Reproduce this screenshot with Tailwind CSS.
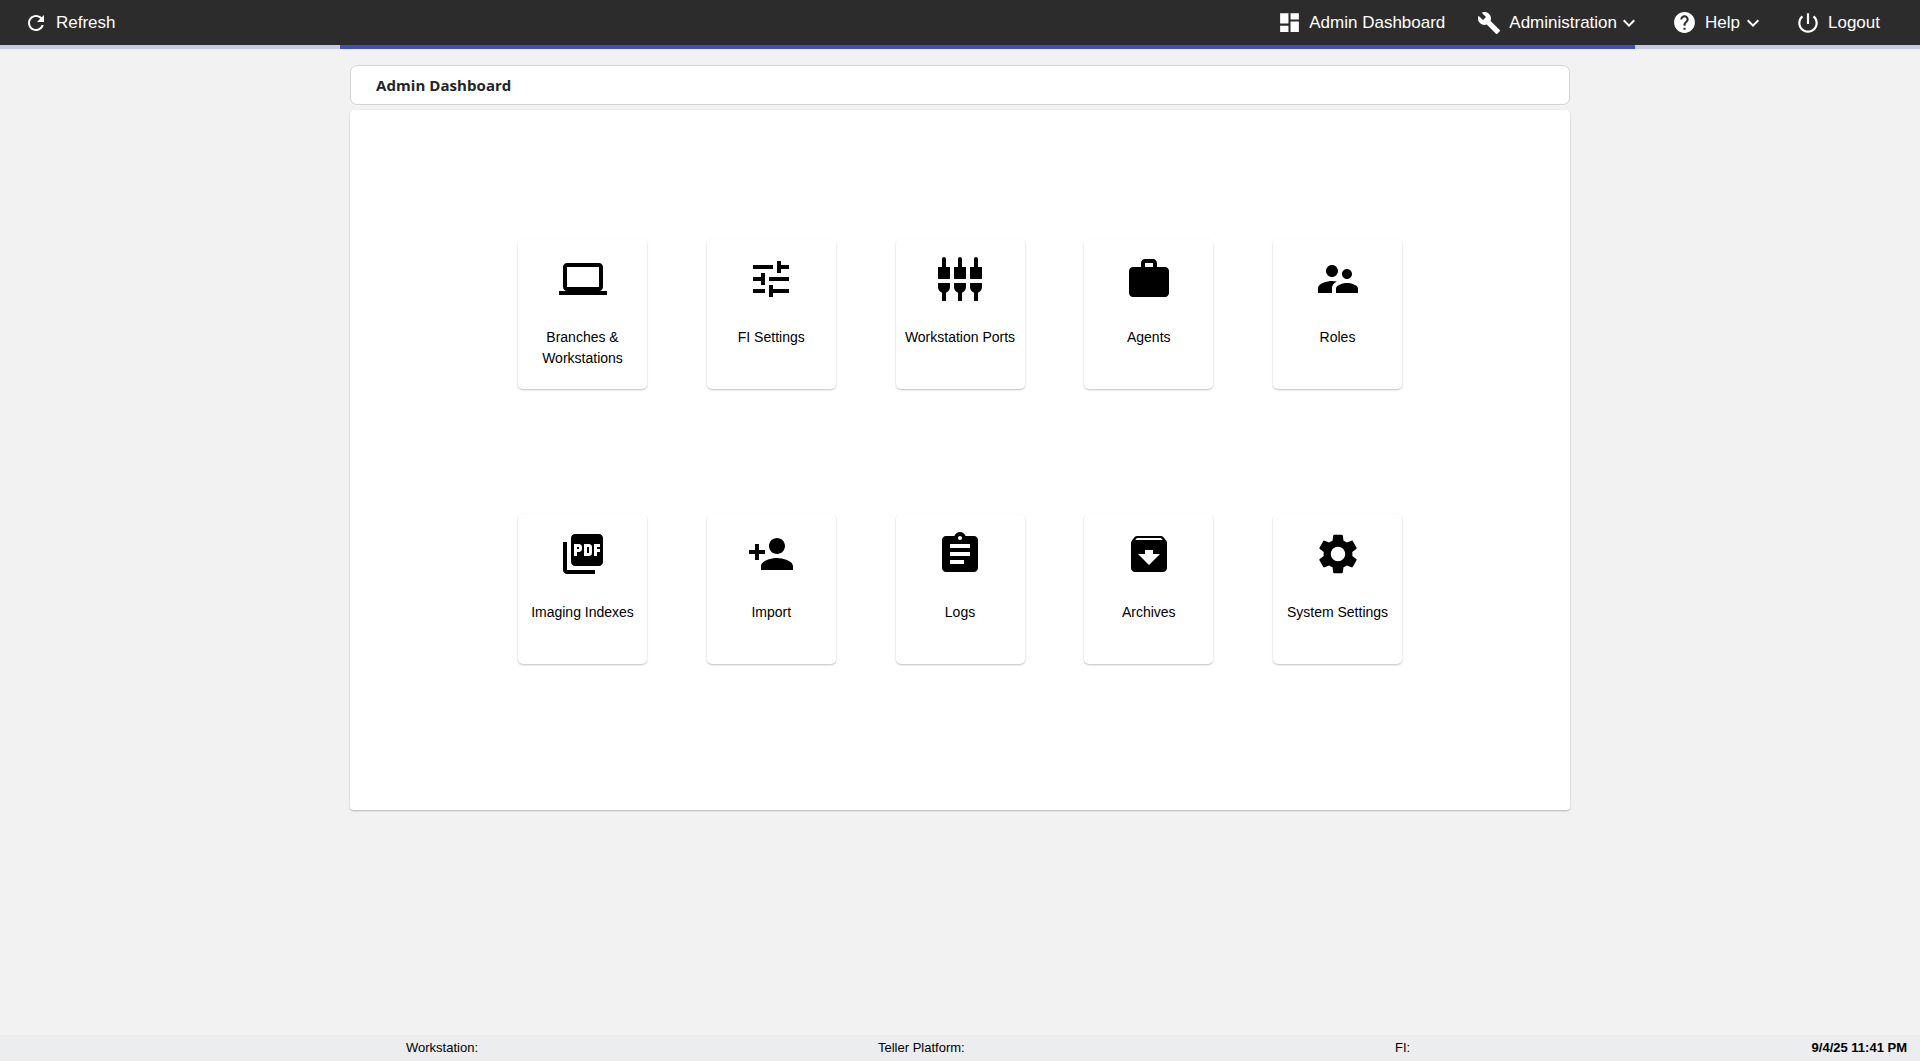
<!DOCTYPE html>
<html><head><meta charset="utf-8"><title>Admin Dashboard</title>
<script src="https://cdn.jsdelivr.net/npm/@tailwindcss/browser@4"></script></head>
<body class="h-[1061px] w-[1920px] overflow-hidden bg-[#f2f2f2] font-['Liberation_Sans',sans-serif] flex flex-col">
<header class="h-[45px] shrink-0 bg-[#2c2c2c] text-white text-[17px] flex items-center pl-[24px] pr-[40px]">
  <svg class="w-6 h-6 fill-white" viewBox="0 0 24 24"><path d="M17.65 6.35C16.2 4.9 14.21 4 12 4c-4.42 0-7.99 3.58-7.99 8s3.57 8 7.99 8c3.73 0 6.84-2.55 7.73-6h-2.08c-.82 2.33-3.04 4-5.65 4-3.31 0-6-2.69-6-6s2.69-6 6-6c1.66 0 3.14.69 4.22 1.78L13 11h7V4l-2.35 2.35z"/></svg>
  <span class="ml-2">Refresh</span>
  <div class="ml-auto flex items-center">
    <svg class="w-[25px] h-[25px] fill-white" viewBox="0 0 24 24"><path d="M3 13h8V3H3v10zm0 8h8v-6H3v6zm10 0h8V11h-8v10zm0-18v6h8V3h-8z"/></svg>
    <span class="ml-[7px]">Admin Dashboard</span>
    <svg class="w-6 h-6 fill-white ml-8" viewBox="0 0 24 24"><path d="M22.7 19l-9.1-9.1c.9-2.3.4-5-1.5-6.9-2-2-5-2.4-7.4-1.3L9 6 6 9 1.6 4.7C.4 7.1.9 10.1 2.9 12.1c1.9 1.9 4.6 2.4 6.9 1.5l9.1 9.1c.4.4 1 .4 1.4 0l2.3-2.3c.5-.4.5-1.1.1-1.4z"/></svg>
    <span class="ml-2">Administration</span>
    <svg class="w-6 h-6 fill-white" viewBox="0 0 24 24"><path d="M7.41 8.59L12 13.17l4.59-4.58L18 10l-6 6-6-6 1.41-1.41z"/></svg>
    <svg class="w-[25px] h-[25px] fill-white ml-[31px]" viewBox="0 0 24 24"><path d="M12 2C6.48 2 2 6.48 2 12s4.48 10 10 10 10-4.48 10-10S17.52 2 12 2zm1 17h-2v-2h2v2zm2.07-7.75l-.9.92C13.45 12.9 13 13.5 13 15h-2v-.5c0-1.1.45-2.1 1.17-2.83l1.24-1.26c.37-.36.59-.86.59-1.41 0-1.1-.9-2-2-2s-2 .9-2 2H8c0-2.21 1.79-4 4-4s4 1.79 4 4c0 .88-.36 1.68-.93 2.25z"/></svg>
    <span class="ml-2">Help</span>
    <svg class="w-6 h-6 fill-white ml-[1px]" viewBox="0 0 24 24"><path d="M7.41 8.59L12 13.17l4.59-4.58L18 10l-6 6-6-6 1.41-1.41z"/></svg>
    <svg class="w-[26px] h-[26px] fill-white ml-[30px]" viewBox="0 0 24 24"><path d="M13 3h-2v10h2V3zm4.83 2.17l-1.42 1.42C17.99 7.86 19 9.81 19 12c0 3.87-3.13 7-7 7s-7-3.13-7-7c0-2.19 1.01-4.14 2.58-5.42L6.17 5.17C4.23 6.82 3 9.26 3 12c0 4.97 4.03 9 9 9s9-4.03 9-9c0-2.74-1.23-5.18-3.17-6.83z"/></svg>
    <span class="ml-[7px]">Logout</span>
  </div>
</header>
<div class="h-1 shrink-0 bg-[#c5cae9] pl-[340px] pr-[285px]"><div class="h-full bg-[#3f51b5]"></div></div>
<main class="flex-1 w-[1220px] ml-[350px] pt-4">
  <div class="h-10 bg-white border border-[#d4d4d4] rounded-[7px] flex items-center pl-[25px] font-['Open_Sans',sans-serif] font-bold text-[15px] tracking-[0.06px] text-[#212529]">Admin Dashboard</div>
  <div class="mt-[5px] h-[700px] bg-white rounded-[4px] shadow-[0_1px_2px_rgba(0,0,0,0.25)] pt-[129px] pl-[168px]">
    <div class="grid grid-cols-[repeat(5,129px)] auto-rows-[150px] gap-x-[59.75px] gap-y-[125px] text-[14px] leading-[21px] text-black text-center">
      <div class="rounded-[5px] bg-white shadow-[0_1px_2px_rgba(0,0,0,0.25)] pt-4 px-2 flex flex-col items-center"><svg class="w-12 h-12" viewBox="0 0 24 24"><path d="M20 18c1.1 0 1.99-.9 1.99-2L22 6c0-1.1-.9-2-2-2H4c-1.1 0-2 .9-2 2v10c0 1.1.9 2 2 2H0v2h24v-2h-4zM4 6h16v10H4V6z"/></svg><div class="mt-6">Branches &amp; Workstations</div></div>
      <div class="rounded-[5px] bg-white shadow-[0_1px_2px_rgba(0,0,0,0.25)] pt-4 px-2 flex flex-col items-center"><svg class="w-12 h-12" viewBox="0 0 24 24"><path d="M3 17v2h6v-2H3zM3 5v2h10V5H3zm10 16v-2h8v-2h-8v-2h-2v6h2zM7 9v2H3v2h4v2h2V9H7zm14 4v-2H11v2h10zm-6-4h2V7h4V5h-4V3h-2v6z"/></svg><div class="mt-6">FI Settings</div></div>
      <div class="rounded-[5px] bg-white shadow-[0_1px_2px_rgba(0,0,0,0.25)] pt-4 px-1 flex flex-col items-center"><svg class="w-12 h-12" viewBox="0 0 24 24"><path d="M5 2c0-.55-.45-1-1-1s-1 .45-1 1v4H1v6h6V6H5V2zm4 14c0 1.3.84 2.4 2 2.82V23h2v-4.18c1.16-.41 2-1.51 2-2.82v-2H9v2zm-8 0c0 1.3.84 2.4 2 2.82V23h2v-4.18C6.16 18.4 7 17.3 7 16v-2H1v2zM21 6V2c0-.55-.45-1-1-1s-1 .45-1 1v4h-2v6h6V6h-2zm-8-4c0-.55-.45-1-1-1s-1 .45-1 1v4H9v6h6V6h-2V2zm4 14c0 1.3.84 2.4 2 2.82V23h2v-4.18c1.16-.41 2-1.51 2-2.82v-2h-6v2z"/></svg><div class="mt-6">Workstation Ports</div></div>
      <div class="rounded-[5px] bg-white shadow-[0_1px_2px_rgba(0,0,0,0.25)] pt-4 px-2 flex flex-col items-center"><svg class="w-12 h-12" viewBox="0 0 24 24"><path d="M20 6h-4V4c0-1.11-.89-2-2-2h-4c-1.11 0-2 .89-2 2v2H4c-1.11 0-1.99.89-1.99 2L2 19c0 1.11.89 2 2 2h16c1.11 0 2-.89 2-2V8c0-1.11-.89-2-2-2zm-6 0h-4V4h4v2z"/></svg><div class="mt-6">Agents</div></div>
      <div class="rounded-[5px] bg-white shadow-[0_1px_2px_rgba(0,0,0,0.25)] pt-4 px-2 flex flex-col items-center"><svg class="w-12 h-12" viewBox="0 0 24 24"><path d="M16.5 12c1.38 0 2.49-1.12 2.49-2.5S17.88 7 16.5 7C15.12 7 14 8.12 14 9.5s1.12 2.5 2.5 2.5zM9 11c1.66 0 2.99-1.34 2.99-3S10.66 5 9 5C7.34 5 6 6.34 6 8s1.34 3 3 3zm7.5 3c-1.83 0-5.5.92-5.5 2.75V19h11v-2.25c0-1.83-3.67-2.75-5.5-2.75zM9 13c-2.33 0-7 1.17-7 3.5V19h7v-2.25c0-.85.33-2.34 2.37-3.47C10.5 13.1 9.66 13 9 13z"/></svg><div class="mt-6">Roles</div></div>
      <div class="rounded-[5px] bg-white shadow-[0_1px_2px_rgba(0,0,0,0.25)] pt-4 px-1 flex flex-col items-center"><svg class="w-12 h-12" viewBox="0 0 24 24"><path d="M20 2H8c-1.1 0-2 .9-2 2v12c0 1.1.9 2 2 2h12c1.1 0 2-.9 2-2V4c0-1.1-.9-2-2-2zm-8.5 7.5c0 .83-.67 1.5-1.5 1.5H9v2H7.5V7H10c.83 0 1.5.67 1.5 1.5v1zm5 2c0 .83-.67 1.5-1.5 1.5h-2.5V7H15c.83 0 1.5.67 1.5 1.5v3zm4-3H19v1h1.5V11H19v2h-1.5V7h3v1.5zM9 9.5h1v-1H9v1zM4 6H2v14c0 1.1.9 2 2 2h14v-2H4V6zm10 5.5h1v-3h-1v3z"/></svg><div class="mt-6">Imaging Indexes</div></div>
      <div class="rounded-[5px] bg-white shadow-[0_1px_2px_rgba(0,0,0,0.25)] pt-4 px-2 flex flex-col items-center"><svg class="w-12 h-12" viewBox="0 0 24 24"><path d="M15 12c2.21 0 4-1.79 4-4s-1.79-4-4-4-4 1.79-4 4 1.79 4 4 4zm-9-2V7H4v3H1v2h3v3h2v-3h3v-2H6zm9 4c-2.67 0-8 1.34-8 4v2h16v-2c0-2.66-5.33-4-8-4z"/></svg><div class="mt-6">Import</div></div>
      <div class="rounded-[5px] bg-white shadow-[0_1px_2px_rgba(0,0,0,0.25)] pt-4 px-2 flex flex-col items-center"><svg class="w-12 h-12" viewBox="0 0 24 24"><path d="M19 3h-4.18C14.4 1.84 13.3 1 12 1c-1.3 0-2.4.84-2.82 2H5c-1.1 0-2 .9-2 2v14c0 1.1.9 2 2 2h14c1.1 0 2-.9 2-2V5c0-1.1-.9-2-2-2zm-7 0c.55 0 1 .45 1 1s-.45 1-1 1-1-.45-1-1 .45-1 1-1zm2 14H7v-2h7v2zm3-4H7v-2h10v2zm0-4H7V7h10v2z"/></svg><div class="mt-6">Logs</div></div>
      <div class="rounded-[5px] bg-white shadow-[0_1px_2px_rgba(0,0,0,0.25)] pt-4 px-2 flex flex-col items-center"><svg class="w-12 h-12" viewBox="0 0 24 24"><path d="M20.54 5.23l-1.39-1.68C18.88 3.21 18.47 3 18 3H6c-.47 0-.88.21-1.16.55L3.46 5.23C3.17 5.57 3 6.02 3 6.5V19c0 1.1.9 2 2 2h14c1.1 0 2-.9 2-2V6.5c0-.48-.17-.93-.46-1.27zM12 17.5L6.5 12H10v-2h4v2h3.5L12 17.5zM5.12 5l.81-1h12l.94 1H5.12z"/></svg><div class="mt-6">Archives</div></div>
      <div class="rounded-[5px] bg-white shadow-[0_1px_2px_rgba(0,0,0,0.25)] pt-4 px-2 flex flex-col items-center"><svg class="w-12 h-12" viewBox="0 0 24 24"><path d="M19.14 12.94c.04-.3.06-.61.06-.94 0-.32-.02-.64-.07-.94l2.03-1.58c.18-.14.23-.41.12-.61l-1.92-3.32c-.12-.22-.37-.29-.59-.22l-2.39.96c-.5-.38-1.03-.7-1.62-.94l-.36-2.54c-.04-.24-.24-.41-.48-.41h-3.84c-.24 0-.43.17-.47.41l-.36 2.54c-.59.24-1.13.57-1.62.94l-2.39-.96c-.22-.08-.47 0-.59.22L2.74 8.87c-.12.21-.08.47.12.61l2.03 1.58c-.05.3-.09.63-.09.94s.02.64.07.94l-2.03 1.58c-.18.14-.23.41-.12.61l1.92 3.32c.12.22.37.29.59.22l2.39-.96c.5.38 1.03.7 1.62.94l.36 2.54c.05.24.24.41.48.41h3.84c.24 0 .44-.17.47-.41l.36-2.54c.59-.24 1.13-.56 1.62-.94l2.39.96c.22.08.47 0 .59-.22l1.92-3.32c.12-.22.07-.47-.12-.61l-2.01-1.58zM12 15.6c-1.98 0-3.6-1.62-3.6-3.6s1.62-3.6 3.6-3.6 3.6 1.62 3.6 3.6-1.62 3.6-3.6 3.6z"/></svg><div class="mt-6">System Settings</div></div>
    </div>
  </div>
</main>
<footer class="h-[26px] shrink-0 bg-[#ebedef] text-[13px] text-black flex items-center">
  <span class="ml-[406px] w-[472px]">Workstation:</span>
  <span class="w-[517px]">Teller Platform:</span>
  <span>FI:</span>
  <span class="ml-auto mr-[13px] font-bold">9/4/25 11:41 PM</span>
</footer>
</body></html>
